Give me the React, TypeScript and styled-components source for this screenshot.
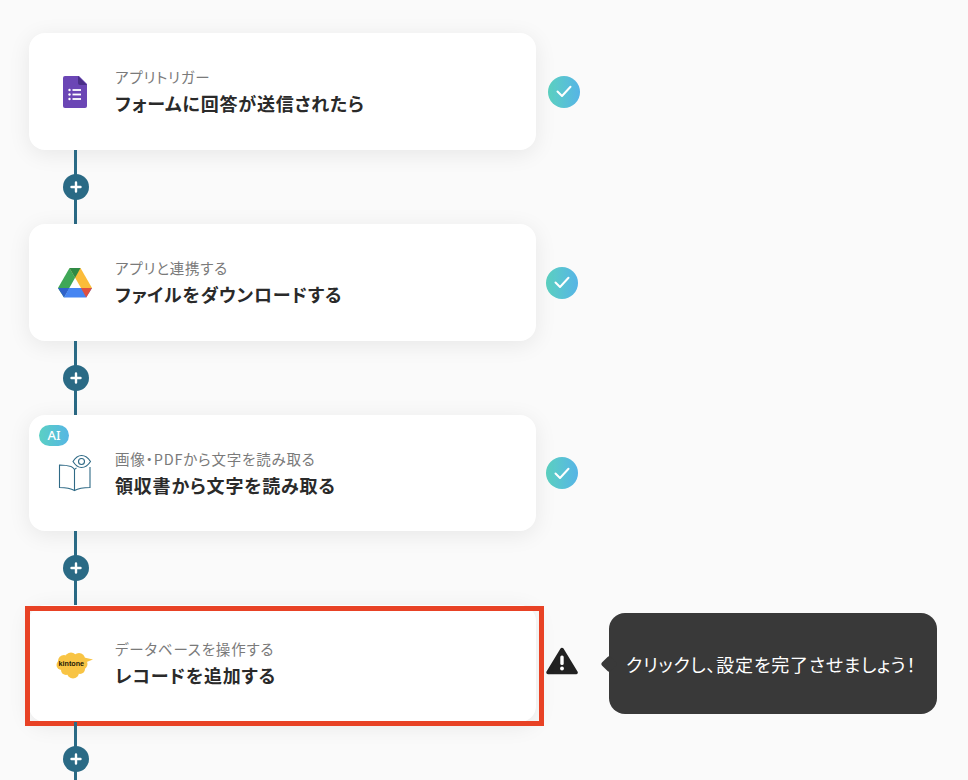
import React from 'react';
import styled, { createGlobalStyle } from 'styled-components';

const GlobalStyle = createGlobalStyle`
  html, body {
    margin: 0;
    height: 780px;
    overflow: hidden;
    background: #fafafa;
    font-family: "Noto Sans CJK JP", "Noto Sans", sans-serif;
    font-feature-settings: "palt";
    letter-spacing: 0.05em;
  }
`;

const FormsIcon = () => (
  <svg width="24" height="32" viewBox="0 0 24 32">
    <path d="M2 0h14l8 8v22a2 2 0 0 1-2 2H2a2 2 0 0 1-2-2V2a2 2 0 0 1 2-2z" fill="#6b46b5" />
    <path d="M15 0l9 9h-7a2 2 0 0 1-2-2z" fill="#4a2f88" />
    <g fill="#fff">
      <circle cx="6.5" cy="14" r="1.2" />
      <circle cx="6.5" cy="18.5" r="1.2" />
      <circle cx="6.5" cy="23" r="1.2" />
      <rect x="9.5" y="13.1" width="8.5" height="1.8" />
      <rect x="9.5" y="17.6" width="8.5" height="1.8" />
      <rect x="9.5" y="22.1" width="8.5" height="1.8" />
    </g>
  </svg>
);

const DriveIcon = () => (
  <svg width="34" height="30" viewBox="0 0 34 30">
    <path d="M11.5 0h11L34 20H23z" fill="#fbbc3a" />
    <path d="M11.5 0l5.6 9.8L6 29.5 0 20z" fill="#3fa757" />
    <path d="M11.5 0h11l-5.4 9.8z" fill="#2f8a45" />
    <path d="M0 20l6 9.5 5.6-9.5z" fill="#2f62c9" />
    <path d="M11.2 20H34l-5.8 9.5H6z" fill="#4685f2" />
    <path d="M23 20h11l-5.8 9.5z" fill="#e0503f" />
  </svg>
);

const BookEyeIcon = () => (
  <svg width="34" height="38" viewBox="0 0 34 38" fill="none" stroke="#2f6a86" strokeWidth="1.1">
    <path d="M13 12.5C9.500 11.500 5.500 11 1.500 11v22.500c6 0 11 .7 15 3 4-2.300 9-3 15.500-3V13" />
    <path d="M13 12.500c1.500.500 2.500 1.500 3.500 3V36.500M16.500 15.500c.5-.5 1-1 2-1.500" />
    <path d="M15 7.500C17.500 3.500 20 1.500 23.500 1.500S30 3.500 32.500 7.500C30 11.500 27 13.500 23.500 13.500S17.500 11.500 15 7.500z" />
    <circle cx="23.500" cy="7.500" r="3" />
  </svg>
);

const KintoneIcon = () => (
  <svg width="40" height="30" viewBox="0 0 40 30">
    <g fill="#f8c444">
      <circle cx="9" cy="12" r="6" />
      <circle cx="16" cy="9.500" r="6" />
      <circle cx="24" cy="10" r="6" />
      <circle cx="27" cy="15" r="5.500" />
      <circle cx="6.500" cy="16" r="5" />
      <circle cx="11" cy="21" r="5" />
      <circle cx="18" cy="23.500" r="6" />
      <circle cx="25" cy="20" r="5" />
      <circle cx="16" cy="16" r="8" />
      <path d="M27 8l11 2.500-9 3.500z" />
    </g>
    <text x="3.500" y="17" fontFamily="'Liberation Sans', sans-serif" fontWeight="700" fontSize="7.200" letterSpacing="0" fill="#1d1806">
      kintone
    </text>
  </svg>
);

const steps = [
  { label: 'アプリトリガー', title: 'フォームに回答が送信されたら', icon: <FormsIcon />, gap: 12 },
  { label: 'アプリと連携する', title: 'ファイルをダウンロードする', icon: <DriveIcon />, gap: 10 },
  { label: '画像・PDFから文字を読み取る', title: '領収書から文字を読み取る', icon: <BookEyeIcon />, gap: 10, ai: true },
];

const Plus = () => (
  <PlusButton>
    <svg width="12" height="12" viewBox="0 0 12 12">
      <path d="M6 1.500v9M1.500 6h9" stroke="#fff" strokeWidth="2.400" strokeLinecap="round" />
    </svg>
  </PlusButton>
);

const App: React.FC = () => (
  <Page>
    <GlobalStyle />
    {steps.map((step) => (
      <React.Fragment key={step.title}>
        <StepRow>
          <Card $short={step.ai}>
            {step.ai && <AiBadge>AI</AiBadge>}
            <IconSlot>{step.icon}</IconSlot>
            <CardText>
              <Label>{step.label}</Label>
              <Title>{step.title}</Title>
            </CardText>
          </Card>
          <CheckBadge $gap={step.gap}>
            <svg width="16" height="13" viewBox="0 0 16 13" fill="none">
              <path d="M1.500 6.500L6 11 14.500 1.800" stroke="#fff" strokeWidth="2" strokeLinecap="round" strokeLinejoin="round" />
            </svg>
          </CheckBadge>
        </StepRow>
        <Connector>
          <Plus />
        </Connector>
      </React.Fragment>
    ))}
    <StepRow>
      <Card $selected>
        <IconSlot>
          <KintoneIcon />
        </IconSlot>
        <CardText>
          <Label>データベースを操作する</Label>
          <Title>レコードを追加する</Title>
        </CardText>
      </Card>
      <WarningSlot>
        <svg width="32" height="28" viewBox="0 0 32 28">
          <path d="M16 2.500L30 25.500H2z" fill="#222" stroke="#222" strokeWidth="3.500" strokeLinejoin="round" />
          <rect x="14.300" y="8.500" width="3.400" height="9.500" rx="1.500" fill="#fff" />
          <circle cx="16" cy="21.500" r="1.900" fill="#fff" />
        </svg>
      </WarningSlot>
      <Tooltip>クリックし、設定を完了させましょう！</Tooltip>
    </StepRow>
    <Connector>
      <Plus />
    </Connector>
  </Page>
);

export default App;

const Page = styled.div`
  display: flex;
  flex-direction: column;
  align-items: flex-start;
  padding: 33px 0 0 29px;
  height: 747px;
  overflow: hidden;
`;

const StepRow = styled.div`
  display: flex;
  flex-shrink: 0;
  align-items: center;
`;

const Card = styled.div<{ $selected?: boolean; $short?: boolean }>`
  position: relative;
  display: flex;
  align-items: center;
  box-sizing: border-box;
  width: 507px;
  height: ${(p) => (p.$short ? 116 : 117)}px;
  padding-left: 26px;
  background: #fff;
  border-radius: 16px;
  box-shadow: 0 4px 22px rgba(0, 0, 0, 0.08);
  ${(p) =>
    p.$selected &&
    `
    &::after {
      content: '';
      position: absolute;
      top: 1px;
      left: -4px;
      right: -8px;
      bottom: -4px;
      border: 5px solid #e84225;
    }
  `}
`;

const AiBadge = styled.span`
  position: absolute;
  top: 10px;
  left: 10px;
  width: 30px;
  height: 21px;
  border-radius: 11px;
  background: linear-gradient(90deg, #5ad0c4, #56b6e4);
  color: #fff;
  font-family: "Noto Sans", sans-serif;
  font-size: 13px;
  font-weight: 500;
  letter-spacing: 0;
  line-height: 21px;
  text-align: center;
`;

const IconSlot = styled.div`
  display: flex;
  align-items: center;
  justify-content: center;
  width: 40px;
  height: 40px;
  margin-right: 20px;
`;

const CardText = styled.div`
  display: flex;
  flex-direction: column;
  gap: 3px;
`;

const Label = styled.div`
  font-size: 14.500px;
  line-height: 20px;
  color: #7a7a7a;
`;

const Title = styled.div`
  font-size: 18px;
  font-weight: 700;
  line-height: 26px;
  color: #2a2a2a;
`;

const CheckBadge = styled.div<{ $gap: number }>`
  display: flex;
  align-items: center;
  justify-content: center;
  width: 32px;
  height: 32px;
  margin-left: ${(p) => p.$gap}px;
  border-radius: 50%;
  background: linear-gradient(90deg, #5cd1c0, #56b4e6);
`;

const WarningSlot = styled.div`
  display: flex;
  margin: 0 0 5px 10px;
`;

const Tooltip = styled.div`
  position: relative;
  display: flex;
  align-items: center;
  box-sizing: border-box;
  width: 328px;
  height: 101px;
  margin-left: 31px;
  padding-left: 17px;
  background: #393939;
  border-radius: 16px;
  color: #fff;
  font-size: 18px;
  white-space: nowrap;
  &::before {
    content: '';
    position: absolute;
    left: -6px;
    top: 50%;
    width: 12px;
    height: 12px;
    background: #393939;
    border-radius: 2px;
    transform: translateY(-50%) rotate(45deg);
  }
`;

const Connector = styled.div`
  position: relative;
  display: flex;
  flex-shrink: 0;
  align-items: center;
  justify-content: center;
  width: 3px;
  height: 74px;
  margin-left: 45px;
  background: #2a6a85;
`;

const PlusButton = styled.div`
  position: absolute;
  flex-shrink: 0;
  display: flex;
  align-items: center;
  justify-content: center;
  width: 26px;
  height: 26px;
  border-radius: 50%;
  background: #2a6a85;
`;
